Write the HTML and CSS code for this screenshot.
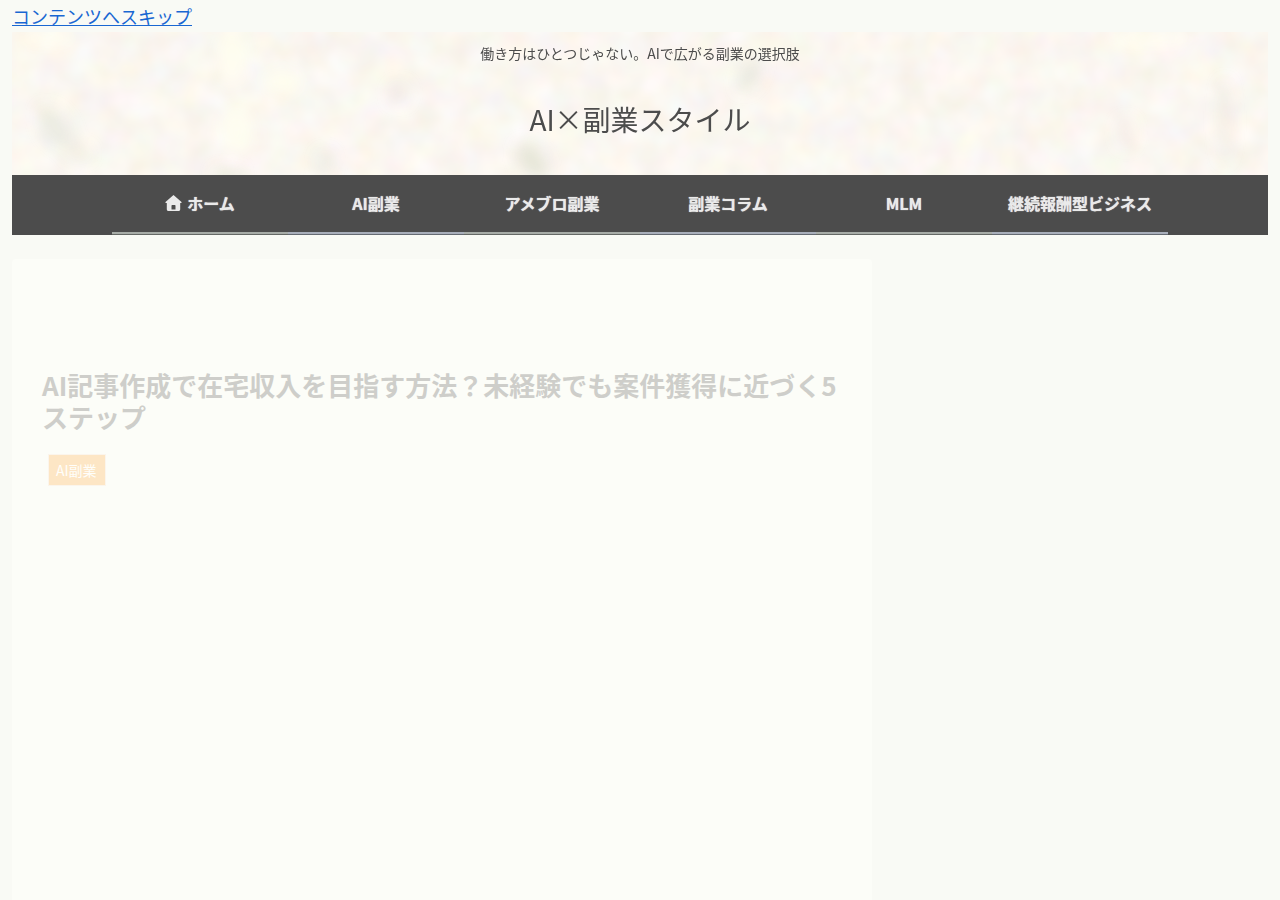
FILE: index.html
```html
<!DOCTYPE html>
<html lang="ja">
<head>
<meta charset="utf-8">
<meta name="viewport" content="width=device-width, initial-scale=1">
<title>AI×副業スタイル</title>
<link rel="stylesheet" href="styles.css">
</head>
<body>
<a class="skip-link" href="#main">コンテンツへスキップ</a>
<header class="header">
  <svg class="header-texture" aria-hidden="true" preserveAspectRatio="none" viewBox="0 0 1256 144">
    <defs>
      <filter id="paper" x="0" y="0" width="100%" height="100%" color-interpolation-filters="sRGB">
        <feTurbulence type="fractalNoise" baseFrequency="0.035" numOctaves="2" seed="8"/>
        <feColorMatrix values="0.05 0.02 0 0 0.948  0 0.06 0 0 0.938  0 0.04 0.08 0 0.884  0 0 0 0 1"/>
      </filter>
      <filter id="soft" x="-100%" y="-100%" width="300%" height="300%"><feGaussianBlur stdDeviation="7"/></filter>
    </defs>
    <rect width="1256" height="144" filter="url(#paper)"/>
    <g filter="url(#soft)" fill="#e6e6d8">
      <ellipse cx="44" cy="96" rx="12" ry="24" transform="rotate(-35 44 96)" opacity=".7"/>
      <ellipse cx="66" cy="122" rx="12" ry="7" opacity=".6"/>
      <ellipse cx="216" cy="144" rx="14" ry="6"/>
      <ellipse cx="313" cy="132" rx="8" ry="12" opacity=".6"/>
      <ellipse cx="387" cy="62" rx="9" ry="10" fill="#eadfdd" opacity=".7"/>
      <ellipse cx="520" cy="130" rx="11" ry="20" transform="rotate(-35 520 130)"/>
      <ellipse cx="738" cy="43" rx="8" ry="18" transform="rotate(30 738 43)" opacity=".8"/>
      <ellipse cx="1114" cy="102" rx="8" ry="14" fill="#eee2e0" opacity=".6"/>
      <ellipse cx="1213" cy="90" rx="6" ry="42" fill="#ece5da" opacity=".5"/>
    </g>
    <g filter="url(#soft)" fill="#fffff0" opacity=".8">
      <ellipse cx="36" cy="6" rx="26" ry="6"/>
      <ellipse cx="220" cy="24" rx="16" ry="30"/>
      <ellipse cx="270" cy="50" rx="20" ry="14"/>
      <ellipse cx="225" cy="100" rx="16" ry="24"/>
      <ellipse cx="1140" cy="6" rx="40" ry="6"/>
    </g>
  </svg>
  <div class="tagline">働き方はひとつじゃない。AIで広がる副業の選択肢</div>
  <div class="logo"><a class="logo-link" href="#">AI×副業スタイル</a></div>
</header>
<nav class="nav" aria-label="メインメニュー">
  <ul class="nav-list">
    <li class="nav-item"><a class="nav-link" href="#"><svg class="home-icon" aria-hidden="true" viewBox="0 0 16 16"><path fill-rule="evenodd" d="M8 0 16 7V8h-1.300v6.200c0 1-.7 1.800-1.700 1.800H3c-1 0-1.700-.8-1.700-1.800V8H0V7ZM7 10C6.200 10 6 10.300 6 11V14.500h4V11c0-.7-.2-1-1-1Z"/></svg>ホーム</a></li>
    <li class="nav-item"><a class="nav-link" href="#">AI副業</a></li>
    <li class="nav-item"><a class="nav-link" href="#">アメブロ副業</a></li>
    <li class="nav-item"><a class="nav-link" href="#">副業コラム</a></li>
    <li class="nav-item"><a class="nav-link" href="#">MLM</a></li>
    <li class="nav-item"><a class="nav-link" href="#">継続報酬型ビジネス</a></li>
  </ul>
</nav>
<main class="main" id="main">
  <article class="article">
    <h1 class="title">AI記事作成で在宅収入を目指す方法？未経験でも案件獲得に近づく5ステップ</h1>
    <a class="category" href="#">AI副業</a>
  </article>
</main>
</body>
</html>
```
FILE: styles.css
```css
* { box-sizing: border-box; }

body {
  margin: 0;
  padding: 0 12px;
  min-height: 100vh;
  display: flex;
  flex-direction: column;
  background: #f9faf5;
  color: #4c4c4c;
  font-family: "Noto Sans CJK JP", sans-serif;
  font-size: 18px;
}

a { color: inherit; text-decoration: none; }

.skip-link {
  align-self: flex-start;
  color: #1967d2;
  line-height: 32px;
  text-decoration: underline;
}

.header {
  position: relative;
  display: flex;
  flex-direction: column;
  align-items: center;
  padding: 9px 0 32px;
  background: #faf7f0;
}

.header-texture {
  position: absolute;
  inset: 0;
  width: 100%;
  height: 100%;
}

.tagline {
  position: relative;
  font-size: 14px;
  line-height: 24px;
}

.logo {
  position: relative;
  padding-top: 31px;
  font-size: 28px;
  line-height: 47px;
}

.nav {
  display: flex;
  justify-content: center;
  background: #4c4c4c;
  color: #eaeaea;
}

.nav-list {
  display: flex;
  margin: 0;
  padding: 0;
  list-style: none;
}

.nav-item {
  width: 176px;
  border-bottom: 1px solid #656965;
}

.nav-item:nth-child(even) { border-color: #656a72; }

.nav-link {
  display: flex;
  align-items: center;
  justify-content: center;
  gap: 5px;
  height: 59px;
  padding-bottom: 2px;
  border-bottom: 2px solid #a7aca7;
  font-size: 16px;
  font-weight: 700;
  text-shadow: 0 0 1px #eaeaea;
}

.nav-item:nth-child(even) .nav-link { border-color: #a8aeba; }

.home-icon {
  width: 17px;
  height: 16px;
  fill: currentColor;
}

.main {
  flex: 1;
  display: flex;
  padding-top: 24px;
}

.article {
  flex: 0 1 860px;
  padding: 110px 30px 30px;
  border-radius: 4px 4px 0 0;
  background: #fcfdf8;
}

.title {
  margin: 0 0 21px;
  color: #cececa;
  font-size: 26px;
  font-weight: 700;
  line-height: 32px;
}

.category {
  display: inline-block;
  margin-left: 6px;
  padding: 0 8px 0 7px;
  border: 1px solid #fbf5ec;
  background: #fde6c5;
  color: #fffefa;
  font-size: 14px;
  line-height: 30px;
}
```
